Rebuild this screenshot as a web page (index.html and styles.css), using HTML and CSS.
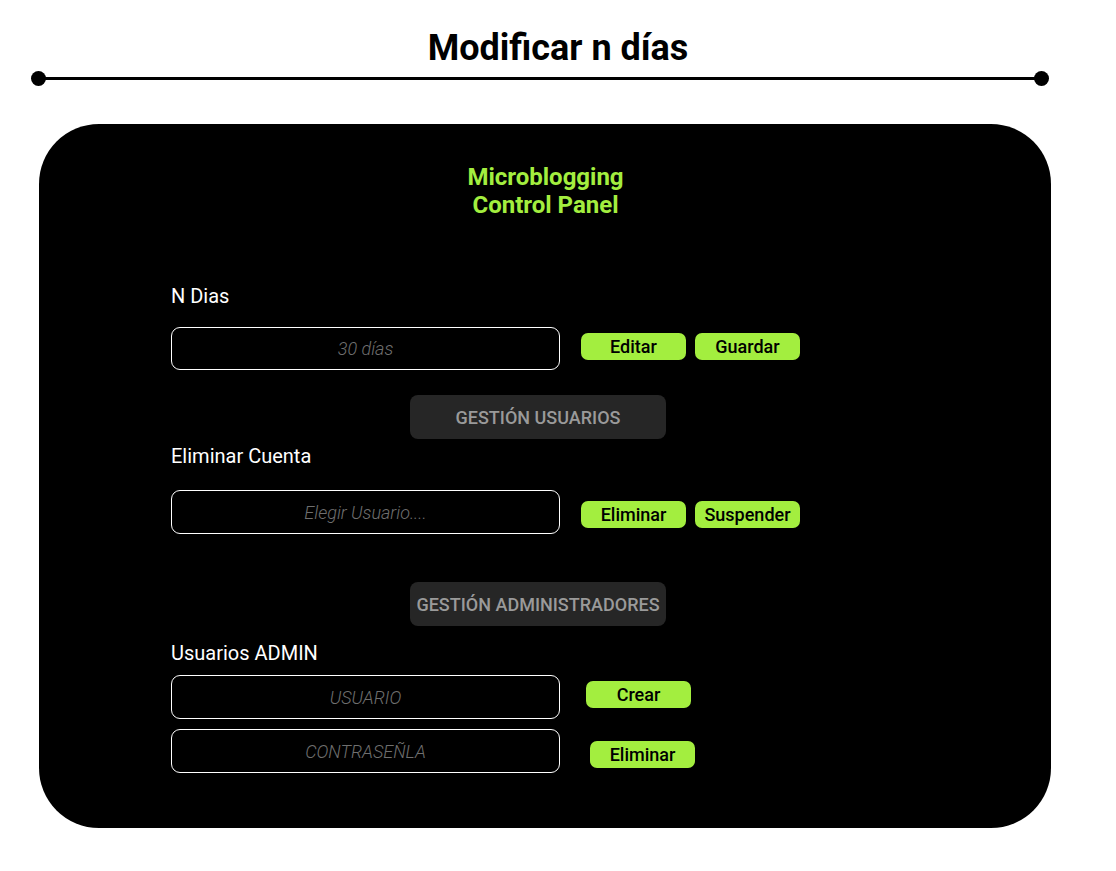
FILE: index.html
```html
<!DOCTYPE html>
<html lang="es">
<head>
<meta charset="utf-8">
<title>Modificar n días</title>
<link rel="stylesheet" href="styles.css">
</head>
<body>
<header class="page-head">
  <h1 class="page-title">Modificar n días</h1>
  <div class="rule"><span class="dot"></span><span class="line"></span><span class="dot"></span></div>
</header>
<main class="panel">
  <h2 class="panel-title">Microblogging<br>Control Panel</h2>
  <section class="content">
    <div class="label label-ndias">N Dias</div>
    <div class="row row-ndias">
      <div class="field">30 días</div>
      <button class="btn">Editar</button>
      <button class="btn">Guardar</button>
    </div>

    <div class="section-tab tab-users">GESTIÓN USUARIOS</div>

    <div class="label label-cuenta">Eliminar Cuenta</div>
    <div class="row row-cuenta">
      <div class="field">Elegir Usuario....</div>
      <button class="btn">Eliminar</button>
      <button class="btn">Suspender</button>
    </div>

    <div class="section-tab tab-admins">GESTIÓN ADMINISTRADORES</div>

    <div class="label label-admin">Usuarios ADMIN</div>
    <div class="row row-user">
      <div class="field">USUARIO</div>
      <button class="btn btn-crear">Crear</button>
    </div>
    <div class="row row-pass">
      <div class="field">CONTRASEÑLA</div>
      <button class="btn btn-elim">Eliminar</button>
    </div>
  </section>
</main>
</body>
</html>
```
FILE: styles.css
```css
* { box-sizing: border-box; }
html, body { margin: 0; padding: 0; background: #fff; }
body {
  width: 1116px;
  height: 871px;
  font-family: Roboto, "Liberation Sans", sans-serif;
  overflow: hidden;
}
.page-head { padding-top: 27px; }
.page-title {
  margin: 0;
  text-align: center;
  font-size: 36px;
  line-height: 42px;
  font-weight: 700;
  color: #000;
}
.rule {
  display: flex;
  align-items: center;
  margin: 1px 0 0 31px;
  width: 1018px;
  height: 16px;
}
.dot {
  width: 15px;
  height: 15px;
  border-radius: 50%;
  background: #000;
  flex: none;
}
.line { flex: 1; height: 3px; background: #000; margin: 0 -2px; }

.panel {
  margin: 38px 0 0 39px;
  width: 1012px;
  height: 704px;
  background: #000;
  border-radius: 60px;
  padding-top: 39px;
}
.panel-title {
  margin: 0 0 0 1px;
  text-align: center;
  color: #a3ee3f;
  font-size: 24px;
  line-height: 28px;
  font-weight: 700;
}
.content { padding-left: 132px; }
.label {
  color: #fff;
  font-size: 20px;
  line-height: 22px;
  font-weight: 400;
}
.label-ndias { margin-top: 66px; }
.label-cuenta { margin-top: 6px; }
.label-admin { margin-top: 16px; }

.row { display: flex; align-items: flex-start; }
.field {
  width: 389px;
  height: 43px;
  border: 1px solid #fff;
  border-radius: 9px;
  display: flex;
  align-items: center;
  justify-content: center;
  color: #6f6f6f;
  font-size: 18px;
  font-style: italic;
  font-weight: 300;
}
.btn {
  height: 27px;
  width: 105px;
  border: 0;
  border-radius: 7px;
  background: #a3ee3f;
  color: #000;
  font-family: inherit;
  font-size: 18px;
  font-weight: 500;
  padding: 0;
  margin-left: 9px;
}
.row .field + .btn { margin-left: 21px; }
.row-ndias { margin-top: 20px; }
.row-ndias .btn { margin-top: 6px; }
.row-cuenta { margin-top: 23px; height: 44px; }
.row-cuenta .field { height: 44px; }
.row-cuenta .btn { margin-top: 11px; }
.row-user { margin-top: 11px; }
.row-user .field, .row-pass .field { height: 44px; }
.row .field + .btn-crear { margin-left: 26px; margin-top: 6px; }
.row-pass { margin-top: 10px; }
.row .field + .btn-elim { margin-left: 30px; margin-top: 12px; }

.section-tab {
  margin-left: 239px;
  width: 256px;
  height: 44px;
  background: #262626;
  border-radius: 8px;
  color: #9a9a9a;
  font-size: 18px;
  font-weight: 500;
  display: flex;
  align-items: center;
  justify-content: center;
  white-space: nowrap;
}
.tab-users { margin-top: 25px; }
.tab-admins { margin-top: 48px; }
```
